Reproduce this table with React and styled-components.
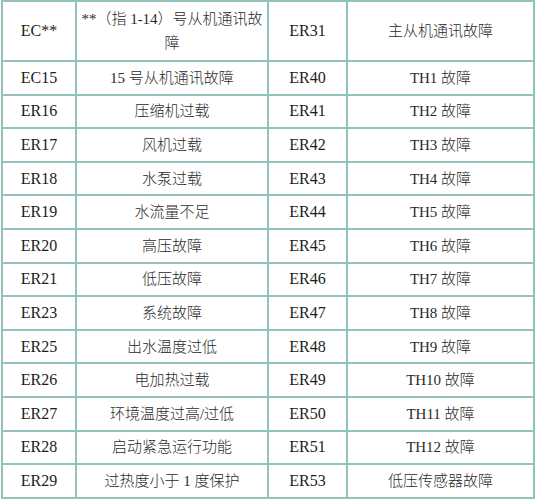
import React from 'react'
import styled, { createGlobalStyle } from 'styled-components';

const GlobalStyle = createGlobalStyle`
    html, body {
        margin: 0;
        padding: 0;
        background: #ffffff;
    }
`;

const Grid = styled.div`
    margin-left: 1px;
    width: 534px;
    box-sizing: border-box;
    display: grid;
    grid-template-columns: 72px 190px 77px 185px;
    grid-template-rows: 58px repeat(13, 31.6px);
    gap: 2px;
    padding: 2px;
    background: #93c2bd;
    font-family: "Liberation Serif", "Times New Roman", "DejaVu Serif", serif;
    font-size: 16px;
    color: #1c1c1c;
`;

const Cell = styled.div`
    background: #ffffff;
    display: flex;
    align-items: center;
    justify-content: center;
    text-align: center;
    line-height: 24px;
    padding: 0 4px;
    white-space: nowrap;
`;

const Code = styled.span`
    font-family: "Liberation Serif", "Times New Roman", serif;
    font-size: 16px;
`;

const Desc = styled.span`
    font-family: "Liberation Serif", "Noto Sans CJK SC", serif;
    font-size: 15px;
    color: #2a2a2a;
    font-weight: 300;
`;

const rows = [
    ['EC15', '15 号从机通讯故障', 'ER40', 'TH1 故障'],
    ['ER16', '压缩机过载', 'ER41', 'TH2 故障'],
    ['ER17', '风机过载', 'ER42', 'TH3 故障'],
    ['ER18', '水泵过载', 'ER43', 'TH4 故障'],
    ['ER19', '水流量不足', 'ER44', 'TH5 故障'],
    ['ER20', '高压故障', 'ER45', 'TH6 故障'],
    ['ER21', '低压故障', 'ER46', 'TH7 故障'],
    ['ER23', '系统故障', 'ER47', 'TH8 故障'],
    ['ER25', '出水温度过低', 'ER48', 'TH9 故障'],
    ['ER26', '电加热过载', 'ER49', 'TH10 故障'],
    ['ER27', '环境温度过高/过低', 'ER50', 'TH11 故障'],
    ['ER28', '启动紧急运行功能', 'ER51', 'TH12 故障'],
    ['ER29', '过热度小于 1 度保护', 'ER53', '低压传感器故障'],
];

export default function App() {
    return (
        <>
            <GlobalStyle />
            <Grid>
                <Cell><Code>EC**</Code></Cell>
                <Cell><Desc>**（指 1-14）号从机通讯故<br />障</Desc></Cell>
                <Cell><Code>ER31</Code></Cell>
                <Cell><Desc>主从机通讯故障</Desc></Cell>

                {rows.map((r) => (
                    <React.Fragment key={r[0]}>
                        <Cell><Code>{r[0]}</Code></Cell>
                        <Cell><Desc>{r[1]}</Desc></Cell>
                        <Cell><Code>{r[2]}</Code></Cell>
                        <Cell><Desc>{r[3]}</Desc></Cell>
                    </React.Fragment>
                ))}
            </Grid>
        </>
    )
}
